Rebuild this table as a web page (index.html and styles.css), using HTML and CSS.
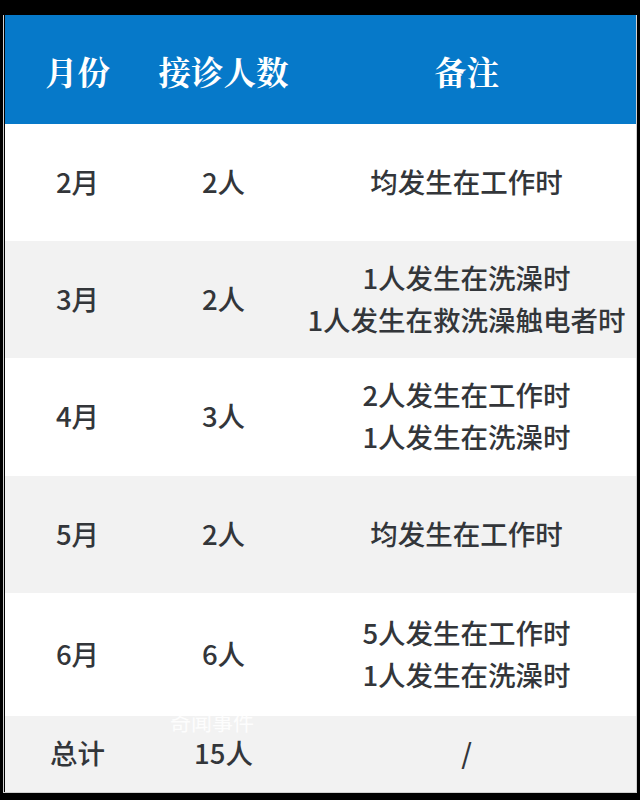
FILE: index.html
```html
<!DOCTYPE html>
<html lang="zh-CN">
<head>
<meta charset="utf-8">
<link rel="stylesheet" href="styles.css">
</head>
<body>
<div class="frame">
  <div class="table">
    <div class="cell head">月份</div>
    <div class="cell head">接诊人数</div>
    <div class="cell head">备注</div>

    <div class="cell">2月</div>
    <div class="cell">2人</div>
    <div class="cell">均发生在工作时</div>

    <div class="cell alt">3月</div>
    <div class="cell alt">2人</div>
    <div class="cell alt">1人发生在洗澡时<br>1人发生在救洗澡触电者时</div>

    <div class="cell">4月</div>
    <div class="cell">3人</div>
    <div class="cell">2人发生在工作时<br>1人发生在洗澡时</div>

    <div class="cell alt">5月</div>
    <div class="cell alt">2人</div>
    <div class="cell alt">均发生在工作时</div>

    <div class="cell">6月</div>
    <div class="cell">6人</div>
    <div class="cell">5人发生在工作时<br>1人发生在洗澡时</div>

    <div class="cell alt">总计</div>
    <div class="cell alt total">15人</div>
    <div class="cell alt">/</div>
  </div>
  <div class="watermark">奇闻事件</div>
</div>
</body>
</html>
```

FILE: styles.css
```css
html, body {
  margin: 0;
  padding: 0;
  background: #000;
}
body {
  padding: 15px 3px 0 3px;
  width: 640px;
  height: 800px;
  box-sizing: border-box;
}
.frame {
  position: relative;
  border-left: 1px solid #d0d0d0;
  border-right: 1px solid #d0d0d0;
  border-bottom: 1px solid #d0d0d0;
  padding-left: 1px;
  background: #000;
}
.table {
  display: grid;
  grid-template-columns: 145px 147px 1fr;
  grid-template-rows: 109px 117px 117px 118px 117px 123px 76px;
  font-family: "Noto Sans CJK SC", "Noto Sans", sans-serif;
  font-weight: 500;
  font-size: 27.5px;
  line-height: 42px;
  color: #33363a;
}
.cell {
  display: flex;
  align-items: center;
  justify-content: center;
  text-align: center;
  background: #fff;
  padding-bottom: 4px;
  box-sizing: border-box;
}
.cell.alt {
  background: #f2f2f2;
}
.cell.total {
  line-height: 32px;
}
.cell.head {
  background: #0679c9;
  color: #fff;
  font-family: "Noto Serif CJK SC", "Noto Sans CJK SC", serif;
  font-weight: 700;
  font-size: 32.5px;
  padding-top: 2px;
  padding-bottom: 0;
}
.watermark {
  position: absolute;
  left: 166px;
  top: 696px;
  font-family: "Noto Sans CJK SC", sans-serif;
  font-size: 21px;
  line-height: 21px;
  color: rgba(255, 255, 255, 0.9);
}
```
